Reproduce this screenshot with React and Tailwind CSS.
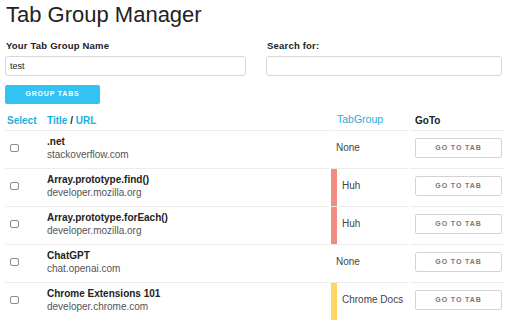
import { useState } from 'react';

const TABS = [
  { title: '.net', url: 'stackoverflow.com', group: null },
  { title: 'Array.prototype.find()', url: 'developer.mozilla.org', group: { name: 'Huh', color: 'bg-[#f28b82]' } },
  { title: 'Array.prototype.forEach()', url: 'developer.mozilla.org', group: { name: 'Huh', color: 'bg-[#f28b82]' } },
  { title: 'ChatGPT', url: 'chat.openai.com', group: null },
  { title: 'Chrome Extensions 101', url: 'developer.chrome.com', group: { name: 'Chrome Docs', color: 'bg-[#fdd663]' } },
];

const COLS = 'grid grid-cols-[34px_288px_77px_95px] gap-x-[2px]';

function TabRow({ tab }) {
  const [checked, setChecked] = useState(false);
  return (
    <div className={`${COLS} h-[38px]`}>
      <div className="flex items-center border-b border-[#ececec] pb-[3px]">
        <button
          onClick={() => setChecked(c => !c)}
          className={`ml-[5px] w-[9px] h-[8px] border border-[#8c8c8c] rounded-[2px] ${checked ? 'bg-[#1eaedb]' : 'bg-white'}`}
        />
      </div>
      <div className="flex flex-col justify-center pl-[6px] border-b border-[#ececec] pb-[4px] leading-[13px] text-[10px]">
        <span className="font-bold text-[#222]">{tab.title}</span>
        <span className="text-[#555]">{tab.url}</span>
      </div>
      <div className="flex items-stretch border-b border-[#ececec] text-[10px] text-[#444]">
        {tab.group ? (
          <>
            <div className={`w-[6px] shrink-0 ${tab.group.color}`} />
            <span className="self-center pl-[5px] pb-[4px]">{tab.group.name}</span>
          </>
        ) : (
          <span className="self-center pl-[5px] pb-[4px]">None</span>
        )}
      </div>
      <div className="flex items-center pl-[5px] border-b border-[#ececec] pb-[3px]">
        <button className="w-[87px] h-[20px] border border-[#d4d4d4] rounded-[2px] bg-white text-[7px] font-bold tracking-[0.9px] text-[#777]">
          GO TO TAB
        </button>
      </div>
    </div>
  );
}

export default function App() {
  const [name, setName] = useState('test');
  const [search, setSearch] = useState('');

  return (
    <div
      className="w-[512px] h-[320px] overflow-hidden bg-white pl-[5px] pr-[7px]"
      style={{ fontFamily: '"Liberation Sans", Arial, sans-serif' }}
    >
      <h1 className="pt-[2px] pl-[1px] text-[22px] leading-[26px] font-normal text-[#222]">Tab Group Manager</h1>

      <div className="mt-[12px] grid grid-cols-[241px_236px] gap-x-[20px]">
        <div>
          <label className="block pl-[1px] text-[9.5px] leading-[12px] font-bold tracking-[0.2px] text-[#222]">Your Tab Group Name</label>
          <input
            value={name}
            onChange={e => setName(e.target.value)}
            className="mt-[4px] w-full h-[20px] border border-[#d8d8d8] rounded-[3px] px-[4px] text-[9px] text-[#222] outline-none"
          />
        </div>
        <div>
          <label className="block pl-[1px] text-[9.5px] leading-[12px] font-bold tracking-[0.2px] text-[#222]">Search for:</label>
          <input
            value={search}
            onChange={e => setSearch(e.target.value)}
            className="mt-[4px] w-full h-[20px] border border-[#d8d8d8] rounded-[3px] px-[4px] text-[9px] text-[#222] outline-none"
          />
        </div>
      </div>

      <button className="mt-[9px] w-[95px] h-[19px] rounded-[2px] bg-[#33c3f0] text-white text-[7px] font-bold tracking-[0.8px]">
        GROUP TABS
      </button>

      {/* Table */}
      <div className="mt-[6px]">
        <div className={`${COLS} h-[21px] text-[10px]`}>
          <div className="flex items-center pl-[2px] border-b border-[#ececec] font-bold text-[#1eaedb]">Select</div>
          <div className="flex items-center pl-[6px] border-b border-[#ececec] font-bold">
            <span className="text-[#1eaedb]">Title</span>
            <span className="text-[#222]">&nbsp;/&nbsp;</span>
            <span className="text-[#1eaedb]">URL</span>
          </div>
          <div className="flex items-center pl-[6px] border-b border-[#ececec] text-[10.5px] text-[#1eaedb]">TabGroup</div>
          <div className="flex items-center pl-[5px] border-b border-[#ececec] font-bold text-[#222]">GoTo</div>
        </div>
        {TABS.map(t => <TabRow key={t.title} tab={t} />)}
      </div>
    </div>
  );
}
